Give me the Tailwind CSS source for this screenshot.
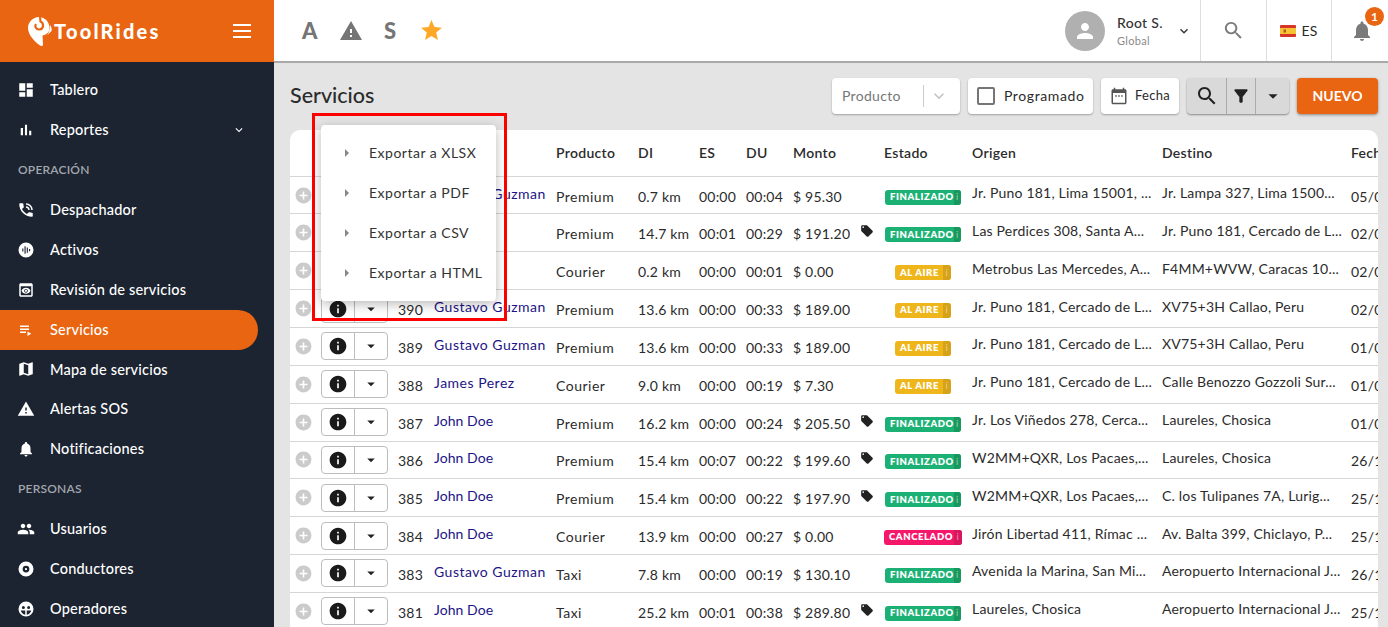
<!DOCTYPE html>
<html lang="en">
<head>
  <meta charset="UTF-8" />
  <title>ToolRides - Servicios</title>
  <script src="https://cdn.jsdelivr.net/npm/@tailwindcss/browser@4"></script>
</head>
<body class="h-[627px] w-[1388px] overflow-hidden bg-[#e4e4e4] font-['Lato',sans-serif] text-[#2b2b2b]">
<div class="flex h-full">

  <!-- sidebar -->
  <aside class="w-[274px] shrink-0 bg-[#1c2431] text-white">
    <div class="flex h-[62px] items-center bg-[#e96511] pl-[28px] pr-[23px]">
      <svg class="h-[29px] w-[24px]" viewBox="0 0 24 29"><path fill="#fff" d="M11 0C5 0 0 5 0 11c0 7 7 14 12 17.500 1.500 1 3 .5 3-1 0-3-.5-6-.5-9 5-1 7-4 7-7.500C21.500 5 17 0 11 0z"/><path fill="none" stroke="#e96511" stroke-width="2.200" d="M12 -1L12.500 4.500C16 6 16 12 11.500 12.500 8 12.800 6.500 9.500 8 7"/><path fill="#fff" d="M22 8c1.500 2 2 4 1.500 6l-5 5c2-2 3.500-6 3.500-11z"/></svg>
      <span class="ml-[2px] text-[20px] font-black tracking-[2.200px]">ToolRides</span>
      <span class="ml-auto flex w-[18px] flex-col gap-[4px]"><i class="h-[2px] bg-white"></i><i class="h-[2px] bg-white"></i><i class="h-[2px] bg-white"></i></span>
    </div>
    <nav id="nav" class="pt-[8.300px]"></nav>
  </aside>

  <div class="min-w-0 flex-1">
    <!-- top bar -->
    <header class="flex h-[63px] items-center border-b-2 border-[#a9a9a9] bg-white pl-[28px]">
      <div class="flex items-center text-[#757575]">
        <span class="w-[37px] text-[22px] font-black">A</span>
        <svg class="h-[24px] w-[24px]" viewBox="0 0 24 24" fill="currentColor"><path d="M1 21h22L12 2 1 21zm12-3h-2v-2h2v2zm0-4h-2v-4h2v4z"/></svg>
        <span class="ml-[21px] w-[14px] text-[22px] font-black">S</span>
        <svg class="ml-[21px] h-[25px] w-[25px]" viewBox="0 0 24 24" fill="#ffa726"><path d="M12 17.270L18.180 21l-1.640-7.030L22 9.240l-7.190-.610L12 2 9.190 8.630 2 9.240l5.460 4.730L5.820 21z"/></svg>
      </div>
      <div class="ml-auto flex h-full items-center">
        <div class="flex h-[40px] w-[40px] items-center justify-center rounded-full bg-[#b0b0b0]">
          <svg class="h-[24px] w-[24px]" viewBox="0 0 24 24" fill="#fff"><path d="M12 12c2.210 0 4-1.790 4-4s-1.790-4-4-4-4 1.790-4 4 1.790 4 4 4zm0 2c-2.670 0-8 1.340-8 4v2h16v-2c0-2.660-5.330-4-8-4z"/></svg>
        </div>
        <div class="ml-[12px] w-[56px]">
          <div class="text-[14px] font-medium leading-[18px] tracking-[.3px] text-[#333]">Root S.</div>
          <div class="mt-[2px] text-[11px] leading-[14px] tracking-[.3px] text-[#8a8a8a]">Global</div>
        </div>
        <svg class="ml-[3px] h-[16px] w-[16px]" viewBox="0 0 24 24" fill="#333"><path d="M16.590 8.590L12 13.170 7.410 8.590 6 10l6 6 6-6z"/></svg>
        <div class="ml-[8px] flex h-full w-[66px] items-center justify-center border-l border-[#dedede]">
          <svg class="h-[23px] w-[23px]" viewBox="0 0 24 24" fill="#7a7a7a"><path d="M15.500 14h-.790l-.280-.270C15.410 12.590 16 11.110 16 9.500 16 5.910 13.090 3 9.500 3S3 5.910 3 9.500 5.910 16 9.500 16c1.610 0 3.090-.590 4.230-1.570l.270.280v.790l5 4.990L20.490 19l-4.990-5zm-6 0C7.010 14 5 11.990 5 9.500S7.010 5 9.500 5 14 7.010 14 9.500 11.990 14 9.500 14z"/></svg>
        </div>
        <div class="flex h-full w-[65px] items-center justify-center gap-[5px] border-l border-[#dedede] text-[14px] tracking-[.2px]">
          <svg class="h-[12px] w-[16px]" viewBox="0 0 16 12"><rect width="16" height="12" rx="1" fill="#d8352a"/><rect y="3" width="16" height="6" fill="#f6c431"/><rect x="3.500" y="4.500" width="2.500" height="3" fill="#b5562b"/></svg>
          <span>ES</span>
        </div>
        <div class="relative flex h-full w-[57px] items-center justify-center border-l border-[#dedede] pl-[4px]">
          <svg class="h-[24px] w-[24px]" viewBox="0 0 24 24" fill="#7a7a7a"><path d="M12 22c1.100 0 2-.9 2-2h-4c0 1.100.89 2 2 2zm6-6v-5c0-3.070-1.640-5.640-4.500-6.320V4c0-.83-.67-1.500-1.500-1.500s-1.500.67-1.500 1.500v.68C7.630 5.360 6 7.920 6 11v5l-2 2v1h16v-1l-2-2z"/></svg>
          <span class="absolute left-[33px] top-[7px] flex h-[19px] w-[19px] items-center justify-center rounded-full bg-[#e96511] text-[12px] font-bold text-white">1</span>
        </div>
      </div>
    </header>

    <main class="relative px-[16px]">
      <div class="mb-[2px] flex h-[65px] items-center">
        <h1 class="text-[21.500px] font-medium text-[#2b2b2b]">Servicios</h1>
        <div class="ml-auto mr-[-6px] flex h-[36px] gap-[8px] text-[14px]">
          <div class="flex w-[128px] items-center rounded bg-white pl-[10px] text-[#777] shadow-[0_1px_2px_rgba(0,0,0,.3)]">
            <span class="w-[81px] tracking-[.3px]">Producto</span>
            <span class="h-[22px] w-px bg-[#ccc]"></span>
            <svg class="ml-[5px] h-[20px] w-[20px]" viewBox="0 0 24 24" fill="#c4c4c4"><path d="M16.590 8.590L12 13.170 7.410 8.590 6 10l6 6 6-6z"/></svg>
          </div>
          <div class="flex w-[125px] items-center gap-[9px] rounded bg-white pl-[9px] tracking-[.6px] shadow-[0_1px_2px_rgba(0,0,0,.3)]">
            <span class="h-[18px] w-[18px] rounded-[2px] border-2 border-[#757575]"></span>Programado
          </div>
          <div class="flex w-[78px] items-center gap-[7px] rounded bg-white pl-[9px] text-[13px] tracking-[.3px] shadow-[0_1px_2px_rgba(0,0,0,.3)]">
            <svg class="h-[18px] w-[18px]" viewBox="0 0 24 24" fill="#555"><path d="M20 3h-1V1h-2v2H7V1H5v2H4c-1.100 0-2 .9-2 2v16c0 1.100.9 2 2 2h16c1.100 0 2-.9 2-2V5c0-1.100-.9-2-2-2zm0 18H4V8h16v13zM7 11h2v2H7zm4 0h2v2h-2zm4 0h2v2h-2z"/></svg>Fecha
          </div>
          <div class="flex w-[102px] items-center rounded bg-[#d9d9d9] shadow-[0_1px_2px_rgba(0,0,0,.4)]">
            <span class="flex h-full w-[40px] items-center justify-center border-r border-[#aaa]"><svg class="h-[24px] w-[24px]" viewBox="0 0 24 24" fill="#222"><path d="M15.500 14h-.790l-.280-.270C15.410 12.590 16 11.110 16 9.500 16 5.910 13.090 3 9.500 3S3 5.910 3 9.500 5.910 16 9.500 16c1.610 0 3.090-.590 4.230-1.570l.270.280v.790l5 4.990L20.490 19l-4.990-5zm-6 0C7.010 14 5 11.990 5 9.500S7.010 5 9.500 5 14 7.010 14 9.500 11.990 14 9.500 14z"/></svg></span>
            <span class="flex h-full w-[29px] items-center justify-center border-r border-[#aaa]"><svg class="h-[20px] w-[20px]" viewBox="0 0 24 24" fill="#222"><path d="M4.250 5.610C6.270 8.200 10 13 10 13v6c0 .55.45 1 1 1h2c.55 0 1-.45 1-1v-6s3.720-4.800 5.740-7.390C20.250 4.950 19.780 4 18.950 4H5.040c-.83 0-1.300.95-.79 1.610z"/></svg></span>
            <span class="flex h-full flex-1 items-center justify-center"><svg class="h-[22px] w-[22px]" viewBox="0 0 24 24" fill="#222"><path d="M7 10l5 5 5-5z"/></svg></span>
          </div>
          <button class="w-[81px] rounded bg-[#e96511] text-[14px] font-bold text-white shadow-[0_1px_3px_rgba(0,0,0,.4)]">NUEVO</button>
        </div>
      </div>

      <!-- table card -->
      <section class="mr-[-6px] overflow-hidden rounded-t-[10px] bg-white text-[14px]">
        <div class="grid h-[46.600px] grid-cols-[108px_36px_122px_82px_61px_47px_47px_91px_88px_190px_189px_80px] items-center border-b border-[#d6d6d6] font-semibold tracking-[.3px]">
          <span></span><span></span><span></span><span>Producto</span><span>DI</span><span>ES</span><span>DU</span><span>Monto</span><span>Estado</span><span>Origen</span><span>Destino</span><span>Fecha</span>
        </div>
        <div id="rows"></div>
      </section>

      <!-- export menu -->
      <div class="absolute left-[38px] top-[50px] h-[208px] w-[195px] border-[3px] border-[#fe0000]"></div>
      <ul class="absolute left-[47px] top-[62px] w-[175px] rounded bg-white py-[8px] text-[14px] tracking-[.5px] text-[#333] shadow-[0_3px_12px_rgba(0,0,0,.28)]">
        <li class="flex h-[40px] items-center pb-[1px] pl-[24px]"><span class="mr-[20px] h-0 w-0 border-y-[4px] border-l-[4px] border-y-transparent border-l-[#888]"></span>Exportar a XLSX</li>
        <li class="flex h-[40px] items-center pb-[1px] pl-[24px]"><span class="mr-[20px] h-0 w-0 border-y-[4px] border-l-[4px] border-y-transparent border-l-[#888]"></span>Exportar a PDF</li>
        <li class="flex h-[40px] items-center pb-[1px] pl-[24px]"><span class="mr-[20px] h-0 w-0 border-y-[4px] border-l-[4px] border-y-transparent border-l-[#888]"></span>Exportar a CSV</li>
        <li class="flex h-[40px] items-center pb-[1px] pl-[24px]"><span class="mr-[20px] h-0 w-0 border-y-[4px] border-l-[4px] border-y-transparent border-l-[#888]"></span>Exportar a HTML</li>
      </ul>
    </main>
  </div>
</div>

<script>
const icons = {
  tablero: '<path d="M3 13h8V3H3v10zm0 8h8v-6H3v6zm10 0h8V11h-8v10zm0-18v6h8V3h-8z"/>',
  reportes: '<path d="M5 9.200h3V19H5zM10.600 5h2.800v14h-2.800zm5.600 8H19v6h-2.800z"/>',
  despachador: '<path d="M20 15.500c-1.250 0-2.450-.2-3.570-.57-.35-.11-.74-.03-1.020.24l-2.200 2.200c-2.830-1.440-5.150-3.750-6.590-6.590l2.200-2.210c.28-.26.36-.65.25-1C8.700 6.450 8.500 5.250 8.500 4c0-.55-.45-1-1-1H4c-.55 0-1 .45-1 1 0 9.390 7.610 17 17 17 .55 0 1-.45 1-1v-3.500c0-.55-.45-1-1-1zM19 12h2c0-4.970-4.030-9-9-9v2c3.870 0 7 3.130 7 7zm-4 0h2c0-2.760-2.240-5-5-5v2c1.660 0 3 1.340 3 3z"/>',
  activos: '<path fill-rule="evenodd" d="M12 2a10 10 0 100 20 10 10 0 000-20zM7 10h1.500v4H7zm3-3h1.500v10H10zm3 1.500h1.500v7H13zm3 2h1.500v3H16z"/>',
  revision: '<path d="M19 3H5c-1.110 0-2 .9-2 2v14c0 1.100.89 2 2 2h14c1.100 0 2-.9 2-2V5c0-1.100-.89-2-2-2zm0 16H5V7h14v12zm-5.500-6c0 .83-.67 1.500-1.500 1.500s-1.500-.67-1.500-1.500.67-1.500 1.500-1.500 1.500.67 1.500 1.500zM12 9c-2.730 0-5.060 1.660-6 4 .94 2.340 3.270 4 6 4s5.060-1.660 6-4c-.94-2.340-3.270-4-6-4zm0 6.500c-1.380 0-2.500-1.120-2.500-2.500s1.120-2.500 2.500-2.500 2.500 1.120 2.500 2.500-1.120 2.500-2.500 2.500z"/>',
  servicios: '<path d="M4 10h12v2H4zm0-4h12v2H4zm0 8h8v2H4zm10 0v6l5-3z"/>',
  mapa: '<path d="M20.500 3l-.16.03L15 5.100 9 3 3.360 4.900c-.21.07-.36.25-.36.48V20.500c0 .28.22.5.5.5l.16-.03L9 18.900l6 2.100 5.640-1.900c.21-.07.36-.25.36-.48V3.500c0-.28-.22-.5-.5-.5zM15 19l-6-2.110V5l6 2.110V19z"/>',
  alertas: '<path d="M1 21h22L12 2 1 21zm12-3h-2v-2h2v2zm0-4h-2v-4h2v4z"/>',
  notificaciones: '<path d="M12 22c1.100 0 2-.9 2-2h-4c0 1.100.89 2 2 2zm6-6v-5c0-3.070-1.640-5.640-4.500-6.320V4c0-.83-.67-1.500-1.500-1.500s-1.500.67-1.500 1.500v.68C7.630 5.360 6 7.920 6 11v5l-2 2v1h16v-1l-2-2z"/>',
  usuarios: '<path d="M16 11c1.660 0 2.990-1.340 2.990-3S17.660 5 16 5c-1.660 0-3 1.340-3 3s1.340 3 3 3zm-8 0c1.660 0 2.990-1.340 2.990-3S9.660 5 8 5C6.340 5 5 6.340 5 8s1.340 3 3 3zm0 2c-2.330 0-7 1.170-7 3.500V19h14v-2.500c0-2.330-4.670-3.500-7-3.500zm8 0c-.29 0-.62.02-.97.05 1.160.84 1.970 1.970 1.970 3.450V19h6v-2.500c0-2.330-4.670-3.500-7-3.500z"/>',
  conductores: '<path fill-rule="evenodd" d="M12 2a10 10 0 100 20 10 10 0 000-20zm0 5.500a4.500 4.500 0 110 9 4.500 4.500 0 010-9zm0 3a1.500 1.500 0 100 3 1.500 1.500 0 000-3z"/>',
  operadores: '<path fill-rule="evenodd" d="M12 2a10 10 0 100 20 10 10 0 000-20zM8.500 8a2 2 0 110 4 2 2 0 010-4zm7 0a2 2 0 110 4 2 2 0 010-4zM11 14v5.500a7.500 7.500 0 01-6-5.500zm2 0h6a7.500 7.500 0 01-6 5.500z"/>',
};

const menu = [
  ["item", "Tablero", "tablero"],
  ["item", "Reportes", "reportes", true],
  ["head", "OPERACIÓN"],
  ["item", "Despachador", "despachador"],
  ["item", "Activos", "activos"],
  ["item", "Revisión de servicios", "revision"],
  ["active", "Servicios", "servicios"],
  ["item", "Mapa de servicios", "mapa"],
  ["item", "Alertas SOS", "alertas"],
  ["item", "Notificaciones", "notificaciones"],
  ["head", "PERSONAS"],
  ["item", "Usuarios", "usuarios"],
  ["item", "Conductores", "conductores"],
  ["item", "Operadores", "operadores"],
];

document.getElementById("nav").innerHTML = menu.map(([type, label, icon, arrow]) => {
  if (type === "head") {
    return `<div class="flex h-[39.900px] items-center pl-[18px] text-[12px] font-semibold tracking-[.2px] text-[#a3a7ad]">${label}</div>`;
  }
  const bg = type === "active" ? "w-[258px] rounded-r-full bg-[#e96511]" : "w-full";
  const chevron = arrow ? `<svg class="ml-auto mr-[28px] h-[14px] w-[14px]" viewBox="0 0 24 24" fill="#fff"><path d="M16.590 8.590L12 13.170 7.410 8.590 6 10l6 6 6-6z"/></svg>` : "";
  return `<a class="flex h-[39.900px] items-center pl-[17px] text-[14.500px] font-medium tracking-[.2px] ${bg}">
    <svg class="h-[18px] w-[18px]" viewBox="0 0 24 24" fill="#fff">${icons[icon]}</svg>
    <span class="ml-[15px]">${label}</span>${chevron}</a>`;
}).join("");

const badges = {
  FINALIZADO: ["w-[76px] bg-[#1cb174]", "bg-[#18985f]"],
  "AL AIRE": ["w-[56px] bg-[#efb61c]", "bg-[#d5a21a]"],
  CANCELADO: ["w-[78px] bg-[#f5176a]", "bg-[#d9155e]"],
};

const services = [
  ["393", "Gustavo Guzman", "Premium", "0.7 km", "00:00", "00:04", "$ 95.30", 0, "FINALIZADO", "Jr. Puno 181, Lima 15001, ...", "Jr. Lampa 327, Lima 1500...", "05/01/2021"],
  ["392", "John Doe", "Premium", "14.7 km", "00:01", "00:29", "$ 191.20", 1, "FINALIZADO", "Las Perdices 308, Santa A...", "Jr. Puno 181, Cercado de L...", "02/01/2021"],
  ["391", "John Doe", "Courier", "0.2 km", "00:00", "00:01", "$ 0.00", 0, "AL AIRE", "Metrobus Las Mercedes, A...", "F4MM+WVW, Caracas 10...", "02/01/2021"],
  ["390", "Gustavo Guzman", "Premium", "13.6 km", "00:00", "00:33", "$ 189.00", 0, "AL AIRE", "Jr. Puno 181, Cercado de L...", "XV75+3H Callao, Peru", "02/01/2021"],
  ["389", "Gustavo Guzman", "Premium", "13.6 km", "00:00", "00:33", "$ 189.00", 0, "AL AIRE", "Jr. Puno 181, Cercado de L...", "XV75+3H Callao, Peru", "01/01/2021"],
  ["388", "James Perez", "Courier", "9.0 km", "00:00", "00:19", "$ 7.30", 0, "AL AIRE", "Jr. Puno 181, Cercado de L...", "Calle Benozzo Gozzoli Sur...", "01/01/2021"],
  ["387", "John Doe", "Premium", "16.2 km", "00:00", "00:24", "$ 205.50", 1, "FINALIZADO", "Jr. Los Viñedos 278, Cerca...", "Laureles, Chosica", "01/01/2021"],
  ["386", "John Doe", "Premium", "15.4 km", "00:07", "00:22", "$ 199.60", 1, "FINALIZADO", "W2MM+QXR, Los Pacaes,...", "Laureles, Chosica", "26/12/2020"],
  ["385", "John Doe", "Premium", "15.4 km", "00:00", "00:22", "$ 197.90", 1, "FINALIZADO", "W2MM+QXR, Los Pacaes,...", "C. los Tulipanes 7A, Lurig...", "25/12/2020"],
  ["384", "John Doe", "Courier", "13.9 km", "00:00", "00:27", "$ 0.00", 0, "CANCELADO", "Jirón Libertad 411, Rímac ...", "Av. Balta 399, Chiclayo, P...", "25/12/2020"],
  ["383", "Gustavo Guzman", "Taxi", "7.8 km", "00:00", "00:19", "$ 130.10", 0, "FINALIZADO", "Avenida la Marina, San Mi...", "Aeropuerto Internacional J...", "26/12/2020"],
  ["381", "John Doe", "Taxi", "25.2 km", "00:01", "00:38", "$ 289.80", 1, "FINALIZADO", "Laureles, Chosica", "Aeropuerto Internacional J...", "25/12/2020"],
];

document.getElementById("rows").innerHTML = services.map(s => {
  const [box, seg] = badges[s[8]];
  const nameSpacing = s[1] === "John Doe" ? "tracking-[.05px]" : "tracking-[.5px]";
  const tag = s[7] ? `<svg class="absolute left-[67px] top-[3px] h-[14px] w-[14px]" viewBox="0 0 24 24" fill="#222"><path d="M21.410 11.580l-9-9C12.050 2.220 11.550 2 11 2H4c-1.100 0-2 .9-2 2v7c0 .55.22 1.050.59 1.420l9 9c.36.36.86.58 1.410.58.55 0 1.050-.22 1.410-.59l7-7c.37-.36.59-.86.59-1.410 0-.55-.23-1.060-.59-1.420zM5.500 7C4.670 7 4 6.330 4 5.500S4.670 4 5.500 4 7 4.670 7 5.500 6.330 7 5.500 7z"/></svg>` : "";
  return `<div class="grid h-[37.850px] grid-cols-[31px_77px_36px_122px_82px_61px_47px_47px_91px_88px_190px_189px_80px] items-center overflow-hidden border-b border-[#d6d6d6] whitespace-nowrap tracking-[.2px]">
    <span class="flex justify-center pr-[5px]"><svg class="h-[19px] w-[19px]" viewBox="0 0 24 24" fill="#cbcbcb"><path d="M12 2C6.480 2 2 6.480 2 12s4.480 10 10 10 10-4.480 10-10S17.520 2 12 2zm5 11h-4v4h-2v-4H7v-2h4V7h2v4h4v2z"/></svg></span>
    <span class="flex h-[28px] w-[67px] rounded border border-[#bdbdbd]">
      <span class="flex w-[33px] items-center justify-center border-r border-[#bdbdbd]"><svg class="h-[20px] w-[20px]" viewBox="0 0 24 24" fill="#1a1a1a"><path d="M12 2C6.480 2 2 6.480 2 12s4.480 10 10 10 10-4.480 10-10S17.520 2 12 2zm1 15h-2v-6h2v6zm0-8h-2V7h2v2z"/></svg></span>
      <span class="flex flex-1 items-center justify-center"><svg class="h-[18px] w-[18px]" viewBox="0 0 24 24" fill="#222"><path d="M7 10l5 5 5-5z"/></svg></span>
    </span>
    <span class="pt-[2px]">${s[0]}</span>
    <span class="pb-[4px] text-[#1d1485] ${nameSpacing}">${s[1]}</span>
    <span class="pt-[2px] tracking-[.5px]">${s[2]}</span>
    <span class="pt-[2px]">${s[3]}</span>
    <span class="pt-[2px]">${s[4]}</span>
    <span class="pt-[2px]">${s[5]}</span>
    <span class="relative pt-[2px]">${s[6]}${tag}</span>
    <span class="flex justify-center pr-[10px] pt-[4px]">
      <span class="flex h-[15px] items-center justify-between overflow-hidden rounded-[3px] pl-[5px] text-[9.500px] font-extrabold tracking-[.6px] text-white ${box}">${s[8]}<span class="flex h-full w-[8px] items-center justify-center font-normal text-white/50 ${seg}">i</span></span>
    </span>
    <span class="pb-[5px]">${s[9]}</span>
    <span class="pb-[5px]">${s[10]}</span>
    <span class="pt-[2px]">${s[11]}</span>
  </div>`;
}).join("");
</script>
</body>
</html>
